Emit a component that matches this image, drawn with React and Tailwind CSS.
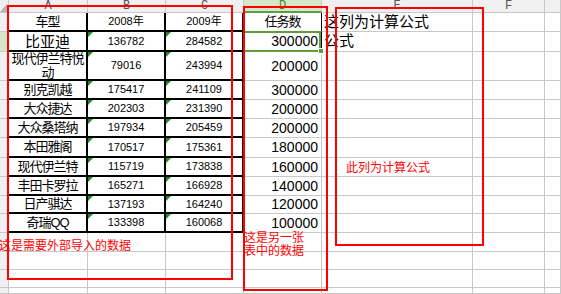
const cars = [
  ['比亚迪', '136782', '284582', '300000'],
  ['现代伊兰特悦动', '79016', '243994', '200000'],
  ['别克凯越', '175417', '241109', '300000'],
  ['大众捷达', '202303', '231390', '200000'],
  ['大众桑塔纳', '197934', '205459', '200000'],
  ['本田雅阁', '170517', '175361', '180000'],
  ['现代伊兰特', '115719', '173838', '160000'],
  ['丰田卡罗拉', '165271', '166928', '140000'],
  ['日产骐达', '137193', '164240', '120000'],
  ['奇瑞QQ', '133398', '160068', '100000'],
];

const letters = ['A', 'B', 'C', 'D', 'E', 'F', ''];
const grid = 'border-r border-b border-[#c8c8c8]';
const black = 'border-r-2 border-b-2 border-black';

function Flag() {
  return <span className="absolute left-0 top-0 w-0 h-0 border-t-[5px] border-t-[#1e8c1e] border-r-[5px] border-r-transparent" />;
}

function HeaderRow() {
  return (
    <>
      <div className="relative bg-[#f0f0f0] border-r border-b border-[#c8c8c8]">
        <svg width="9" height="13" className="absolute left-0 top-0">
          <polygon points="0,12 7,12 7,4" fill="#b4b4b4" />
        </svg>
      </div>
      {letters.map((l, i) =>
        l === 'D' ? (
          <div key={i} className="flex items-center justify-center bg-[#d6e6ca] border-r border-r-[#c8c8c8] border-b-2 border-b-[#5e9c3c] font-['Liberation_Mono',monospace] text-[12px] leading-none text-[#3f8a1e]">
            {l}
          </div>
        ) : (
          <div key={i} className="flex items-center justify-center bg-[#f0f0f0] border-r border-b border-[#c8c8c8] font-['Liberation_Mono',monospace] text-[12px] leading-none text-[#555]">
            {l}
          </div>
        )
      )}
    </>
  );
}

function BodyRow({ r }) {
  const car = r >= 2 && r <= 11 ? cars[r - 2] : null;
  const inTable = r >= 1 && r <= 11;
  const cls = inTable ? black : grid;

  let a = null;
  if (r === 1) a = <span className="text-[13px] tracking-[-1px]">车型</span>;
  if (car) {
    a =
      r === 2 ? (
        <span className="text-[15px] leading-none">{car[0]}</span>
      ) : (
        <span className="text-[13px] leading-[14px] tracking-[-1px] px-px">{car[0]}</span>
      );
  }

  return (
    <>
      <div className={`${r === 2 ? 'bg-[#d6e6ca]' : 'bg-[#f0f0f0]'} ${grid}`} />
      <div className={`flex items-center justify-center text-center ${cls}`}>{a}</div>
      <div className={`relative flex items-center justify-center text-[11px] ${cls}`}>
        {r === 1 && '2008年'}
        {car && (
          <>
            <Flag />
            {car[1]}
          </>
        )}
      </div>
      <div className={`relative flex items-center justify-center text-[11px] ${cls}`}>
        {r === 1 && '2009年'}
        {car && (
          <>
            <Flag />
            {car[2]}
          </>
        )}
      </div>
      {r === 1 ? (
        <div className="flex items-center justify-center text-[13px] tracking-[-1px] border-r border-r-black border-b border-b-[#c8c8c8]">
          任务数
        </div>
      ) : (
        <div className={`flex items-center justify-end pr-[3px] text-[14px] ${r === 2 ? 'border-r border-r-black border-b border-b-[#c8c8c8]' : grid}`}>
          {car && car[3]}
        </div>
      )}
      {r === 8 ? (
        <div className={`flex items-center pl-[24px] text-[12px] text-[#ff0000] whitespace-nowrap font-['Noto_Sans_CJK_SC',sans-serif] ${grid}`}>
          此列为计算公式
        </div>
      ) : (
        <div className={`flex items-center pl-[2px] text-[15px] whitespace-nowrap ${grid}`}>
          {r === 1 && '这列为计算公式'}
          {r === 2 && '公式'}
        </div>
      )}
      <div className={grid} />
      <div className={grid} />
    </>
  );
}

export default function App() {
  const rows = Array.from({ length: 15 }, (_, i) => i + 1);
  return (
    <div className="relative w-[561px] h-[294px] overflow-hidden bg-white text-black font-['Liberation_Sans','Noto_Sans_CJK_SC',sans-serif]">
      <div className="grid h-full grid-cols-[9px_79px_78px_78px_78px_151px_72px_1fr] grid-rows-[13px_19px_20px_29px_19px_19px_19px_20px_19px_19px_18px_19px_19px_18px_18px_1fr]">
        <HeaderRow />
        {rows.map((r) => (
          <BodyRow key={r} r={r} />
        ))}
      </div>

      {/* selected cell D2 */}
      <div className="absolute left-[243px] top-[31px] w-[78px] h-[21px] border-2 border-[#5e9c3c]" />
      <div className="absolute left-[318px] top-[48px] w-[6px] h-[6px] bg-[#5e9c3c] border border-white" />

      {/* annotation frames */}
      <div className="absolute left-[7px] top-[5px] w-[226px] h-[275px] border-2 border-[#ff0000]" />
      <div className="absolute left-[243px] top-[6px] w-[85px] h-[285px] border-2 border-[#ff0000]" />
      <div className="absolute left-[335px] top-[7px] w-[149px] h-[239px] border-2 border-[#ff0000]" />

      {/* annotation notes */}
      <div className="absolute left-[-1px] top-[238px] text-[12px] leading-[14px] text-[#ff0000] font-['Noto_Sans_CJK_SC',sans-serif] whitespace-nowrap">
        这是需要外部导入的数据
      </div>
      <div className="absolute left-[244px] top-[230px] text-[12px] leading-[13px] text-[#ff0000] font-['Noto_Sans_CJK_SC',sans-serif]">
        这是另一张
        <br />
        表中的数据
      </div>
    </div>
  );
}
